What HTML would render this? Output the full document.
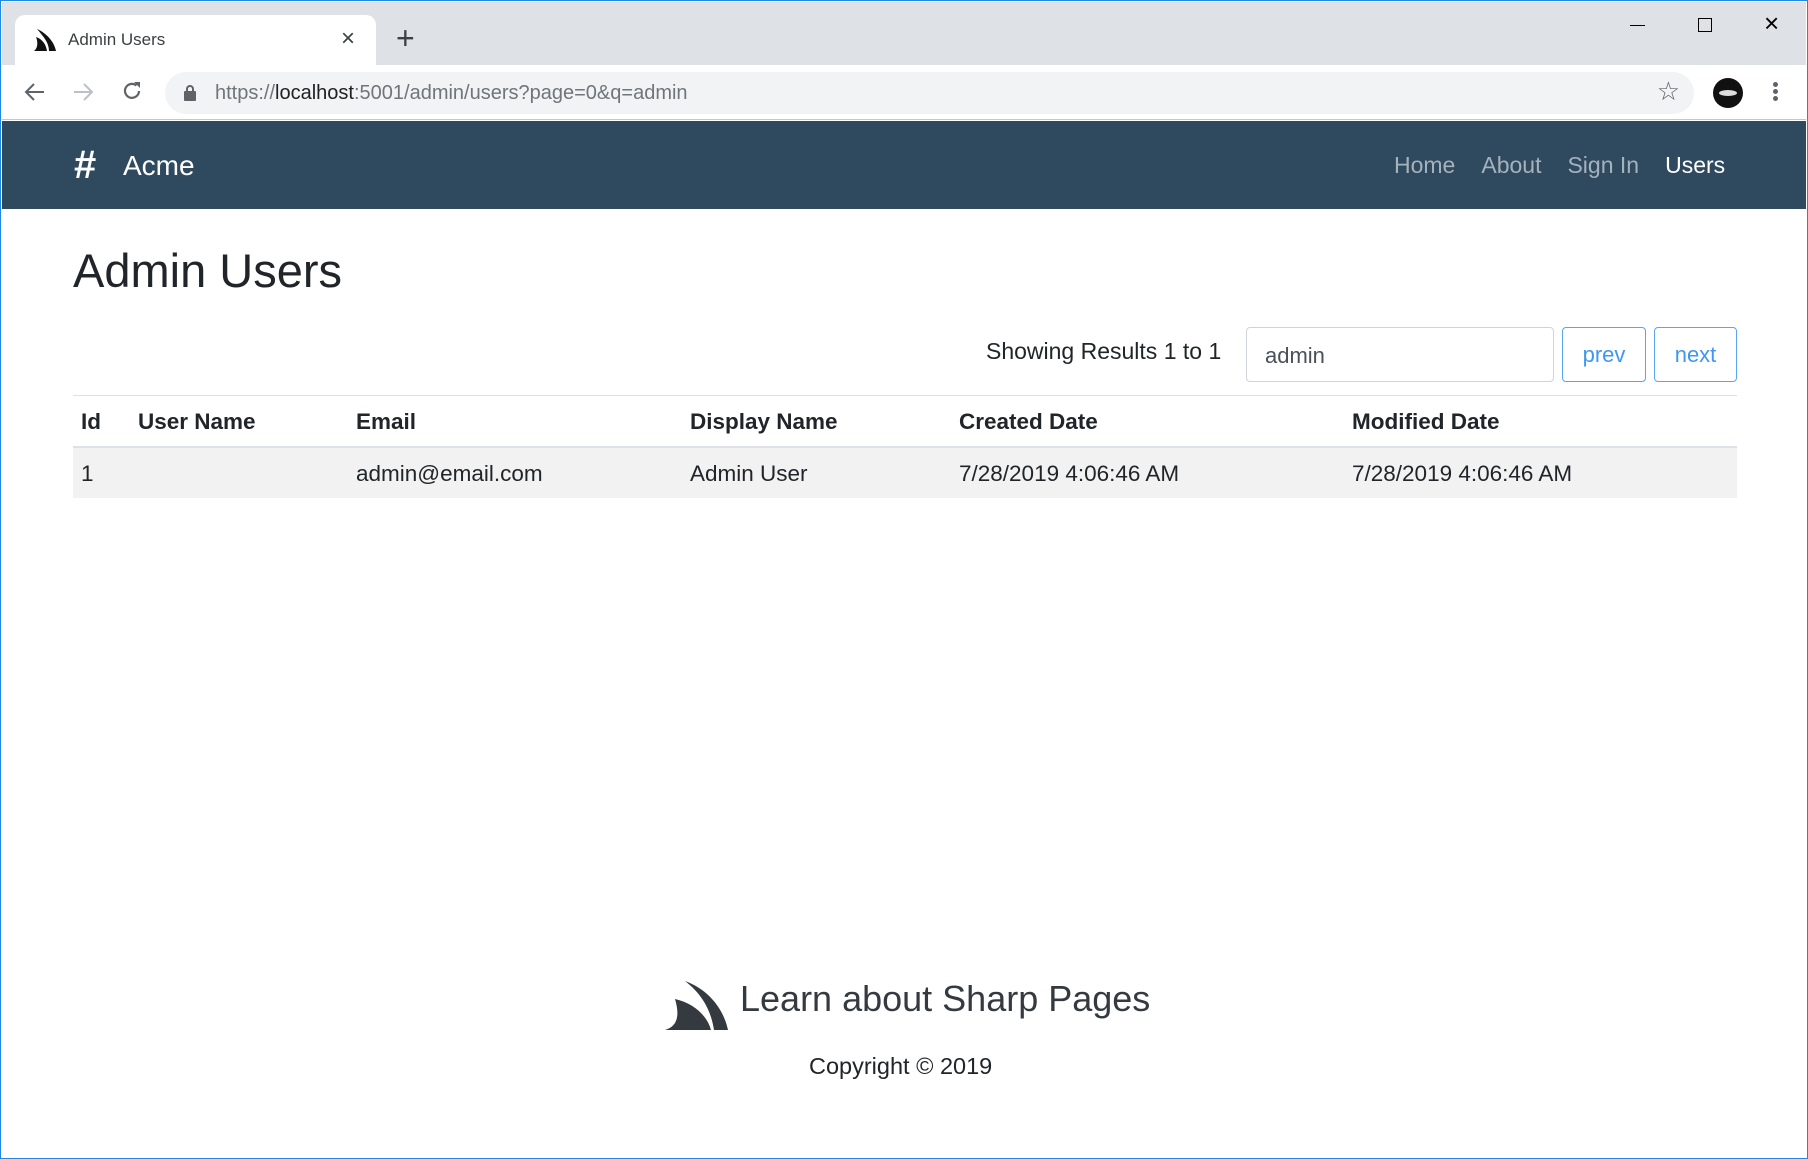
<!DOCTYPE html>
<html><head><meta charset="utf-8"><style>
*{box-sizing:border-box;margin:0;padding:0}
html,body{width:1808px;height:1159px;overflow:hidden;background:#fff;font-family:"Liberation Sans",sans-serif;color:#212529}
.win{position:absolute;left:0;top:0;width:1808px;height:1159px;border:1px solid #1e88e5}
.tabs{position:absolute;left:1px;top:1px;right:1px;height:63px;background:#dee1e6}
.tab{position:absolute;left:13px;top:13px;width:361px;height:51px;background:#fff;border-radius:10px 10px 0 0}
.tab .t{position:absolute;left:53px;top:15px;font-size:17px;color:#3c4043}
.addr{position:absolute;left:1px;top:64px;right:1px;height:55px;background:#fff;border-bottom:1px solid #c5c7ca}
.omni{position:absolute;left:163px;top:7px;width:1529px;height:42px;background:#f1f3f4;border-radius:21px}
.omni .u{position:absolute;left:50px;top:10px;font-size:20px;color:#70757a}
.omni .u b{font-weight:normal;color:#202124}
.nav{position:absolute;left:1px;top:120px;right:1px;height:88px;background:#2f4a5f}
.brand{position:absolute;left:121px;top:29px;font-size:28px;color:#fff}
.hash{position:absolute;left:72px;top:22px;font-size:40px;font-weight:bold;color:#fff}
.links{position:absolute;left:1392px;top:31px;font-size:23px;color:#a5b1bb;white-space:nowrap}
.links span{margin-right:26px}
h1{position:absolute;left:72px;top:246px;font-size:47px;font-weight:500;line-height:1}
.show{position:absolute;left:985px;top:337px;font-size:23px}
.inp{position:absolute;left:1245px;top:326px;width:308px;height:55px;border:1px solid #ced4da;border-radius:4px;font-size:22px;padding:15px 0 0 18px;color:#495057}
.btn{position:absolute;top:326px;height:55px;border:1px solid #57a6f5;border-radius:4px;color:#3d97f3;font-size:22px;text-align:center;padding-top:14px}
.tbl{position:absolute;left:72px;top:394px;width:1664px;border-top:1px solid #dee2e6}
.hd{height:52px;border-bottom:2px solid #dee2e6;position:relative;font-weight:bold;font-size:22.5px}
.rw{height:50px;background:#f2f2f2;position:relative;font-size:22.5px}
.hd span,.rw span{position:absolute;top:13px;white-space:nowrap}
.foot{position:absolute;left:739px;top:977px;font-size:36px;color:#343a40}
.copy{position:absolute;left:808px;top:1052px;font-size:23.5px}
</style></head><body><div class="win">
<div class="tabs">
 <div class="tab">
  <svg style="position:absolute;left:19px;top:14px" width="24" height="22" viewBox="0 0 24 22"><path d="M3 0C12 4 20 12 22 22H15C15 14 10 8 3 0Z" fill="#111"/><path d="M2 8C8 10 12 15 13 22H0C4 19 4 13 2 8Z" fill="#111"/></svg>
  <div class="t">Admin Users</div>
  <div style="position:absolute;left:326px;top:10px;font-size:24px;color:#3c4043">×</div>
 </div>
 <div style="position:absolute;left:394px;top:18px;font-size:32px;color:#3c4043">+</div>
 <div style="position:absolute;left:1628px;top:23px;width:15px;height:1px;background:#000"></div>
 <div style="position:absolute;left:1696px;top:16px;width:14px;height:14px;border:1px solid #000"></div>
 <div style="position:absolute;left:1762px;top:6px;font-size:26px;color:#000;font-weight:100">×</div>
</div>
<div class="addr">
 <svg style="position:absolute;left:22px;top:16px" width="22" height="22" viewBox="0 0 22 22"><path d="M20 11H3M10 3L2 11L10 19" stroke="#5f6368" stroke-width="2" fill="none"/></svg>
 <svg style="position:absolute;left:70px;top:16px" width="22" height="22" viewBox="0 0 22 22"><path d="M2 11H19M12 3L20 11L12 19" stroke="#bdc1c6" stroke-width="2" fill="none"/></svg>
 <svg style="position:absolute;left:119px;top:15px" width="22" height="22" viewBox="0 0 22 22"><path d="M18 11A7 7 0 1 1 15.5 5.5" stroke="#5f6368" stroke-width="2.2" fill="none"/><path d="M13 2H19V8Z" fill="#5f6368"/></svg>
 <div class="omni">
  <svg style="position:absolute;left:19px;top:13px" width="12" height="16" viewBox="0 0 12 16"><rect x="0" y="6" width="12" height="10" rx="1" fill="#5f6368"/><path d="M3 7V4a3 3 0 0 1 6 0v3" stroke="#5f6368" stroke-width="2" fill="none"/></svg>
  <div class="u">https://<b>localhost</b>:5001/admin/users?page=0&amp;q=admin</div>
  <div style="position:absolute;right:14px;top:4px;font-size:26px;color:#5f6368">☆</div>
 </div>
 <div style="position:absolute;left:1711px;top:13px;width:30px;height:30px;border-radius:50%;background:#111"><div style="position:absolute;left:6px;top:12px;width:18px;height:6px;background:#ddd;border-radius:50%"></div></div>
 <div style="position:absolute;left:1771px;top:17px;width:5px;height:5px;border-radius:50%;background:#5f6368;box-shadow:0 7px 0 #5f6368,0 14px 0 #5f6368"></div>
</div>
<div class="nav">
 <div class="hash">#</div>
 <div class="brand">Acme</div>
 <div class="links"><span>Home</span><span>About</span><span>Sign In</span><span style="color:#fff">Users</span></div>
</div>
<h1>Admin Users</h1>
<div class="show">Showing Results 1 to 1</div>
<div class="inp">admin</div>
<div class="btn" style="left:1561px;width:84px">prev</div>
<div class="btn" style="left:1653px;width:83px">next</div>
<div class="tbl">
 <div class="hd"><span style="left:8px">Id</span><span style="left:65px">User Name</span><span style="left:283px">Email</span><span style="left:617px">Display Name</span><span style="left:886px">Created Date</span><span style="left:1279px">Modified Date</span></div>
 <div class="rw"><span style="left:8px">1</span><span style="left:283px">admin@email.com</span><span style="left:617px">Admin User</span><span style="left:886px">7/28/2019 4:06:46 AM</span><span style="left:1279px">7/28/2019 4:06:46 AM</span></div>
</div>
<svg style="position:absolute;left:664px;top:980px" width="64" height="49" viewBox="0 0 64 49"><path d="M20 0C42 8 58 26 63 49H49C46 30 38 14 20 0Z" fill="#343a40"/><path d="M10 18C28 22 42 34 46 49H0C10 46 16 38 10 18Z" fill="#343a40"/></svg>
<div class="foot">Learn about Sharp Pages</div>
<div class="copy">Copyright © 2019</div>
</div></body></html>
